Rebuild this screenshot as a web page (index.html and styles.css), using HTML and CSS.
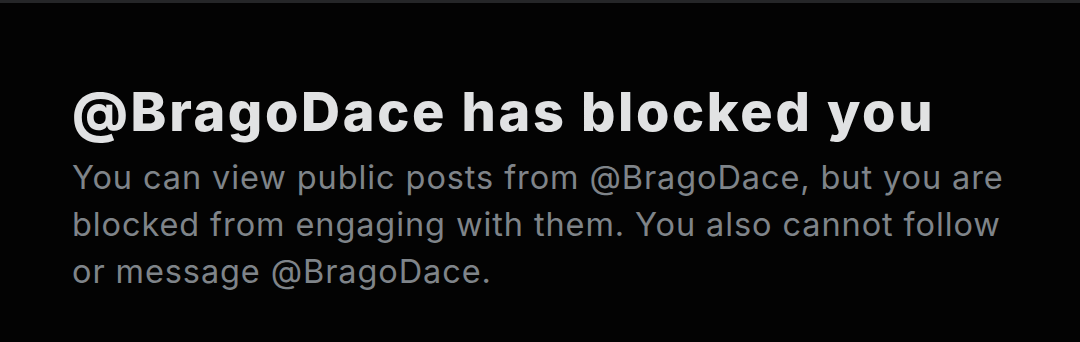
FILE: index.html
```html
<!DOCTYPE html>
<html lang="en">
<head>
    <meta charset="UTF-8">
    <meta name="viewport" content="width=device-width, initial-scale=1.0">
    <title>Blocked</title>
    <link rel="stylesheet" href="styles.css">
</head>
<body>
    <main class="blocked-panel">
        <div class="blocked-message">
            <h1 class="blocked-title">@BragoDace has blocked you</h1>
            <p class="blocked-text">
                You can view public posts from @BragoDace, but you are
                blocked from engaging with them. You also cannot follow
                or message @BragoDace.
            </p>
        </div>
    </main>
</body>
</html>
```

FILE: styles.css
```css
* {
    margin: 0;
    padding: 0;
    box-sizing: border-box;
}

body {
    font-family: Inter, 'Liberation Sans', sans-serif;
    background-color: #030303;
    color: #e7e9ea;
    min-height: 100vh;
}

.blocked-panel {
    border-top: 3px solid #252628;
    min-height: 100vh;
}

.blocked-message {
    padding: 78px 40px 0 72px;
}

.blocked-title {
    font-size: 54px;
    font-weight: 800;
    line-height: 62px;
    letter-spacing: 2.65px;
    color: #e1e2e3;
}

.blocked-text {
    margin-top: 11px;
    max-width: 950px;
    font-size: 32.5px;
    line-height: 47px;
    letter-spacing: 0.9px;
    color: #7f8489;
}
```
